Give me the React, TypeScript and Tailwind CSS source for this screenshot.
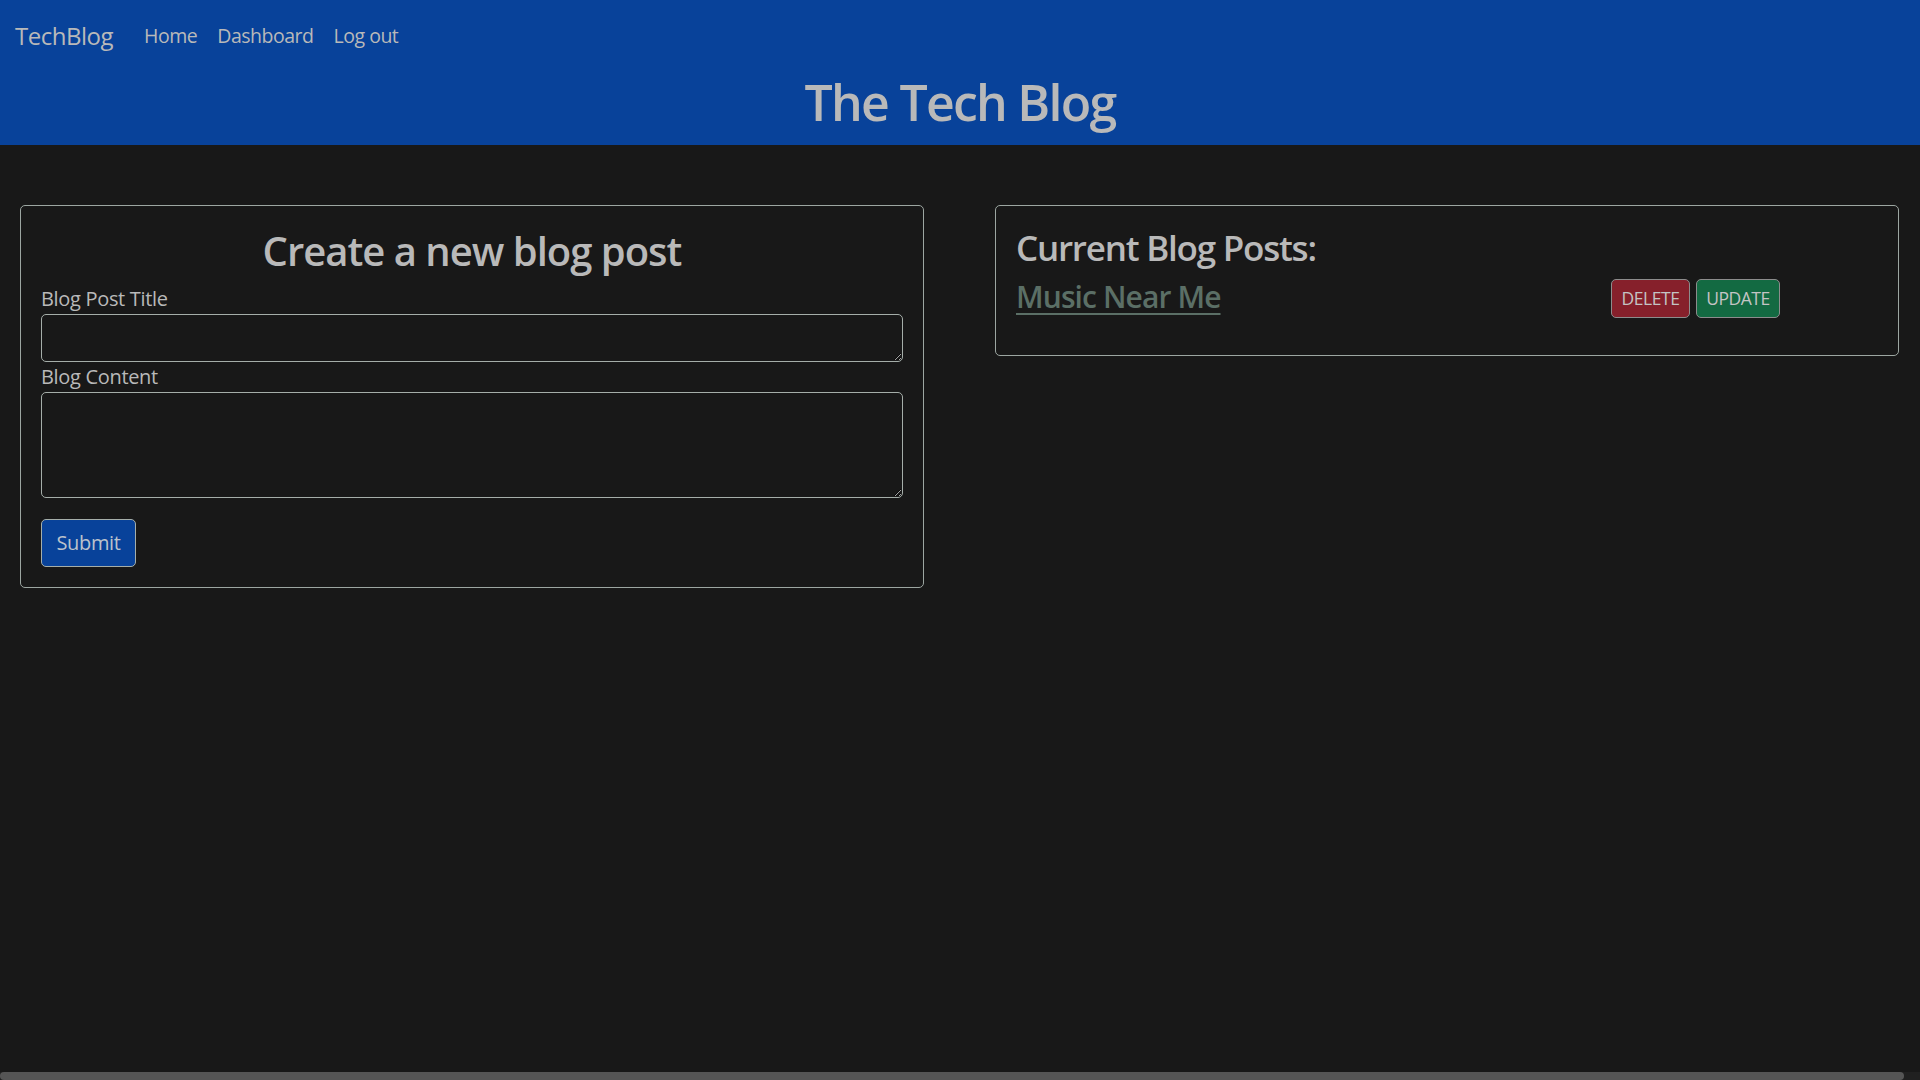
export default function App() {
  return (
    <div className="min-h-screen bg-[#181818] text-[#b9b9b9] font-['Open_Sans',sans-serif] overflow-hidden">
      <header className="bg-[#08429a] pb-[13px]">
        <nav className="flex items-center px-[15px] pt-[17px]">
          <a href="#" className="mr-[31px] text-[24px] leading-[38px] tracking-[-0.02em] text-[#b9b9b9]">TechBlog</a>
          <div className="flex gap-[20px] text-[19.5px] leading-[38px] tracking-[-0.025em]">
            <a href="#">Home</a>
            <a href="#">Dashboard</a>
            <a href="#">Log out</a>
          </div>
        </nav>
        <h1 className="mt-[17px] text-center text-[50px] leading-[60px] font-semibold tracking-[-0.035em]">The Tech Blog</h1>
      </header>

      <main className="flex items-start gap-[71px] px-[20px] pt-[60px]">
        <div className="w-[904px] rounded-[5px] border border-[#9ca6a1] p-[20px]">
          <h2 className="mt-[1px] text-center text-[40px] leading-[48px] font-semibold tracking-[-0.025em]">Create a new blog post</h2>
          <form className="mt-[9px] tracking-[-0.02em]">
            <label className="block text-[20px] leading-[30px]">Blog Post Title</label>
            <textarea
              rows={1}
              className="block w-full h-[48px] rounded-[5px] border border-[#a5aea9] bg-[#181818] px-[15px] py-[7px] text-[20px] [color-scheme:dark] outline-none"
            />
            <label className="block text-[20px] leading-[30px]">Blog Content</label>
            <textarea
              rows={3}
              className="block w-full h-[106px] rounded-[5px] border border-[#a5aea9] bg-[#181818] px-[15px] py-[7px] text-[20px] [color-scheme:dark] outline-none"
            />
            <button
              type="button"
              className="mt-[21px] h-[48px] w-[95px] rounded-[5px] border border-[#a5aea9] bg-[#08429a] text-[20px] text-[#bcc2cc]"
            >
              Submit
            </button>
          </form>
        </div>

        <div className="w-[904px] rounded-[5px] border border-[#9ca6a1] px-[20px] pt-[21px] pb-[37px]">
          <h3 className="text-[35px] leading-[42px] font-semibold tracking-[-0.035em]">Current Blog Posts:</h3>
          <div className="mt-[10px] flex items-start">
            <a href="#" className="w-[595px] text-[30px] leading-[36px] font-semibold tracking-[-0.03em] text-[#5b6f66] underline decoration-2 underline-offset-[5px]">
              Music Near Me
            </a>
            <div className="flex gap-[6px] tracking-[-0.03em]">
              <button type="button" className="h-[39px] w-[79px] rounded-[5px] border border-[#8c8c8c] bg-[#86202b] text-[17.5px] text-[#c4c4c4]">DELETE</button>
              <button type="button" className="h-[39px] w-[84px] rounded-[5px] border border-[#8c8c8c] bg-[#136a42] text-[17.5px] text-[#c4c4c4]">UPDATE</button>
            </div>
          </div>
        </div>
      </main>

      <div className="fixed bottom-0 left-0 right-0 h-[8px] bg-[#202020]">
        <div className="h-full w-[1904px] rounded-full bg-[#555555]" />
      </div>
    </div>
  )
}
